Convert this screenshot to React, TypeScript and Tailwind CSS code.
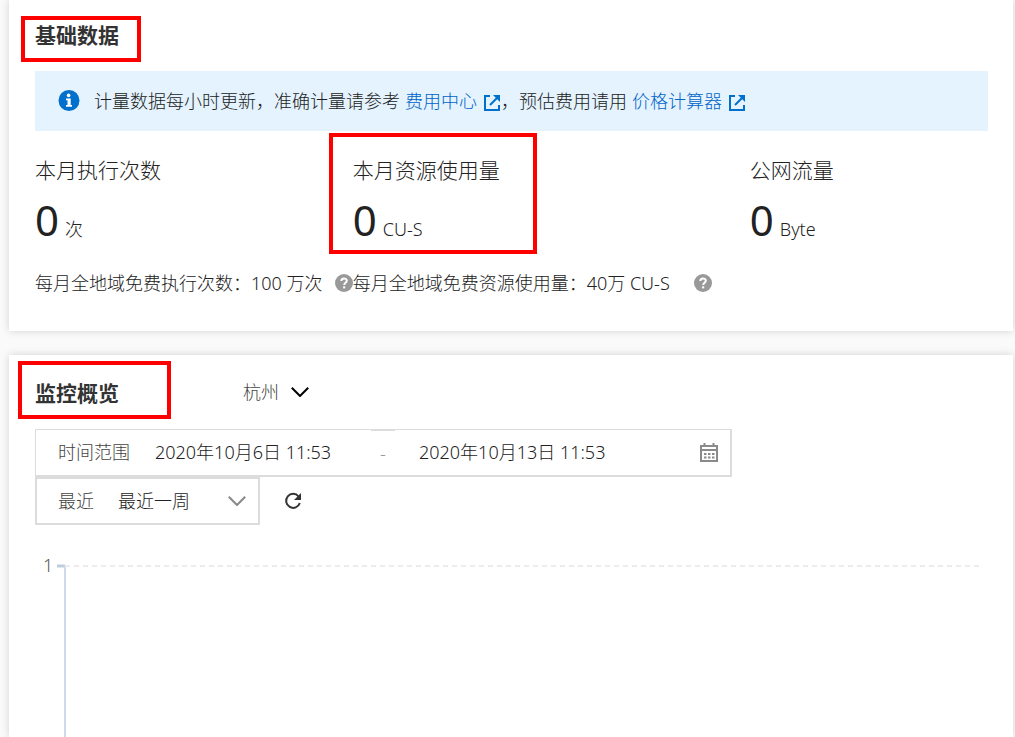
import { useState } from 'react';
import type { ReactNode } from 'react';

interface StatProps {
  label: string;
  unit: string;
  highlighted?: boolean;
  children?: ReactNode;
}

function InfoIcon() {
  return (
    <svg className="h-[22px] w-[22px] shrink-0" viewBox="0 0 22 22" aria-hidden="true">
      <circle cx="11" cy="10.5" r="10.5" fill="#0070cc" />
      <circle cx="10.6" cy="5.4" r="1.8" fill="#fff" />
      <path d="M8 8.5h4.7v6.4H14v1.8H8v-1.8h1.5v-4.6H8z" fill="#fff" />
    </svg>
  );
}

function ExternalIcon() {
  return (
    <svg className="mt-1 h-[18px] w-[18px]" viewBox="0 0 18 18" fill="none" stroke="#0070cc" strokeWidth="2" aria-hidden="true">
      <path d="M7 2H2v14h14v-5" />
      <path d="M7 11l7-7" />
      <path d="M10 1h7v7z" fill="#0070cc" stroke="none" />
    </svg>
  );
}

function HelpIcon() {
  return (
    <svg className="h-[18px] w-[18px]" viewBox="0 0 18 18" fill="none" aria-hidden="true">
      <circle cx="9" cy="9" r="9" fill="#999" />
      <path d="M6.3 7.1c0-3.6 5.5-3.4 5.5-.3 0 2-2.6 2.1-2.6 4.2" stroke="#fff" strokeWidth="2" />
      <path d="M8.1 12.3h2.1v2.1H8.1z" fill="#fff" />
    </svg>
  );
}

function CalendarIcon() {
  return (
    <svg className="h-5 w-5" viewBox="0 0 20 20" fill="none" stroke="#8a8a8a" aria-hidden="true">
      <path d="M2 3h16v15H2zM1 7h18" strokeWidth="2" />
      <path d="M5.5 0v3M14.5 0v3" strokeWidth="2" />
      <path d="M5 11h2.5M9 11h2.5M13 11h2.5M5 14.5h2.5M9 14.5h2.5M13 14.5h2.5" strokeWidth="2" />
    </svg>
  );
}

function RefreshIcon() {
  return (
    <svg className="h-[18px] w-[18px]" viewBox="0 0 18 18" fill="none" aria-hidden="true">
      <path d="M14.6 4.5A7 7 0 1 0 15.8 11" stroke="#333" strokeWidth="2" />
      <path d="M17 1v7h-7z" fill="#333" />
    </svg>
  );
}

function Chevron({ className }: { className: string }) {
  return (
    <svg className={className} viewBox="0 0 18 10" fill="none" stroke="currentColor" strokeWidth="2" aria-hidden="true">
      <path d="M.8 .8L9 9l8.2-8.2" />
    </svg>
  );
}

function Stat({ label, unit, highlighted, children }: StatProps) {
  return (
    <div className="relative whitespace-nowrap">
      {highlighted && (
        <span className="pointer-events-none absolute -left-6 -top-[21px] h-[121px] w-52 border-4 border-[#f00]" />
      )}
      <h3 className="text-[21px] leading-8">{label}</h3>
      <p className="mt-1 flex items-baseline gap-1.5 text-[18px] leading-[60px]">
        <span className="text-[42px] font-normal">0</span>
        <span>{unit}</span>
      </p>
      {children}
    </div>
  );
}

export default function App() {
  const [region, setRegion] = useState('杭州');
  const [range, setRange] = useState('最近一周');
  const [start, setStart] = useState('2020年10月6日 11:53');
  const [end, setEnd] = useState('2020年10月13日 11:53');

  return (
    <main className="flex min-h-screen flex-col gap-6 bg-[#fafafa] pl-[9px] pr-0.5 font-['Noto_Sans','Noto_Sans_CJK_SC',sans-serif] text-[18px] font-light text-[#222]">
      <section className="bg-white pb-8 pl-[26px] pr-[25px] pt-4 shadow-[0_0_8px_rgba(0,0,0,0.16)]">
        <div className="relative w-fit">
          <h2 className="font-['Noto_Sans_CJK_SC',sans-serif] text-[21px] font-bold leading-9 text-[#333]">基础数据</h2>
          <span className="pointer-events-none absolute -left-3.5 top-0 h-[46px] w-[120px] border-4 border-[#f00]" />
        </div>
        <div className="mt-[19px] flex min-h-[60px] items-center gap-3.5 bg-[#e4f3fe] px-[23px]">
          <InfoIcon />
          <p className="flex items-center">
            <span>计量数据每小时更新，准确计量请参考</span>
            <a href="#billing" className="ml-[5px] flex items-center gap-1.5 text-[#0064c8]">
              费用中心
              <ExternalIcon />
            </a>
            <span>，预估费用请用</span>
            <a href="#calculator" className="ml-[5px] flex items-center gap-1.5 text-[#0064c8]">
              价格计算器
              <ExternalIcon />
            </a>
          </p>
        </div>
        <div className="mt-[23px] grid grid-cols-[4fr_5fr_3fr]">
          <Stat label="本月执行次数" unit="次">
            <p className="mt-2 flex items-center justify-between leading-8">
              每月全地域免费执行次数：100 万次
              <button type="button" aria-label="执行次数说明">
                <HelpIcon />
              </button>
            </p>
          </Stat>
          <Stat label="本月资源使用量" unit="CU-S" highlighted>
            <p className="mt-2 flex items-center gap-6 leading-8">
              每月全地域免费资源使用量：40万 CU-S
              <button type="button" aria-label="资源使用量说明">
                <HelpIcon />
              </button>
            </p>
          </Stat>
          <Stat label="公网流量" unit="Byte" />
        </div>
      </section>

      <section className="flex flex-1 flex-col bg-white pl-[26px] pr-[25px] pt-4 shadow-[0_0_8px_rgba(0,0,0,0.16)]">
        <div className="flex items-center gap-[124px]">
          <div className="relative">
            <h2 className="font-['Noto_Sans_CJK_SC',sans-serif] text-[21px] font-bold leading-[42px] text-[#333]">
              监控概览
            </h2>
            <span className="pointer-events-none absolute -left-[17px] -top-2.5 h-[58px] w-[153px] border-4 border-[#f00]" />
          </div>
          <div className="relative flex items-center text-[#444]">
            <select
              aria-label="地域"
              value={region}
              onChange={(e) => setRegion(e.target.value)}
              className="w-[66px] appearance-none bg-transparent leading-8"
            >
              <option>杭州</option>
              <option>上海</option>
            </select>
            <Chevron className="pointer-events-none absolute right-0 h-2.5 w-[18px] text-black" />
          </div>
        </div>

        <div className="mt-4 flex h-12 w-full max-w-[697px] items-center border border-b-2 border-r-2 border-[#dcdcdc] pl-[22px] pr-[11px]">
          <label htmlFor="start" className="mr-[25px] text-[#444]">
            时间范围
          </label>
          <input
            id="start"
            value={start}
            onChange={(e) => setStart(e.target.value)}
            className="w-[216px] bg-transparent outline-none"
          />
          <span className="flex h-full w-6 items-center justify-center border-t border-[#dcdcdc] text-[#999]">-</span>
          <input
            aria-label="结束时间"
            value={end}
            onChange={(e) => setEnd(e.target.value)}
            className="ml-6 min-w-0 flex-1 bg-transparent outline-none"
          />
          <button type="button" aria-label="选择日期">
            <CalendarIcon />
          </button>
        </div>
        <div className="flex items-center gap-6">
          <div className="relative flex h-12 w-[225px] items-center border-2 border-[#dcdcdc] px-[21px]">
            <label htmlFor="range" className="mr-6 text-[#444]">
              最近
            </label>
            <select
              id="range"
              value={range}
              onChange={(e) => setRange(e.target.value)}
              className="flex-1 appearance-none bg-transparent"
            >
              <option>最近一周</option>
              <option>最近一天</option>
            </select>
            <Chevron className="pointer-events-none absolute right-3 h-2.5 w-[18px] text-[#888]" />
          </div>
          <button type="button" aria-label="刷新">
            <RefreshIcon />
          </button>
        </div>

        <div className="mt-6 flex min-h-40 flex-1 pr-2">
          <svg className="w-full" role="img" aria-label="监控图表">
            <text x="8" y="23" fill="#555" className="text-[18px]">
              1
            </text>
            <path d="M22 17h8" stroke="#bccde0" strokeWidth="3" />
            <line x1="30" y1="17" x2="30" y2="100%" stroke="#cddae9" strokeWidth="2" />
            <line x1="30" y1="17" x2="100%" y2="17" stroke="#ececec" strokeWidth="2" strokeDasharray="5 4" />
          </svg>
        </div>
      </section>
    </main>
  );
}
